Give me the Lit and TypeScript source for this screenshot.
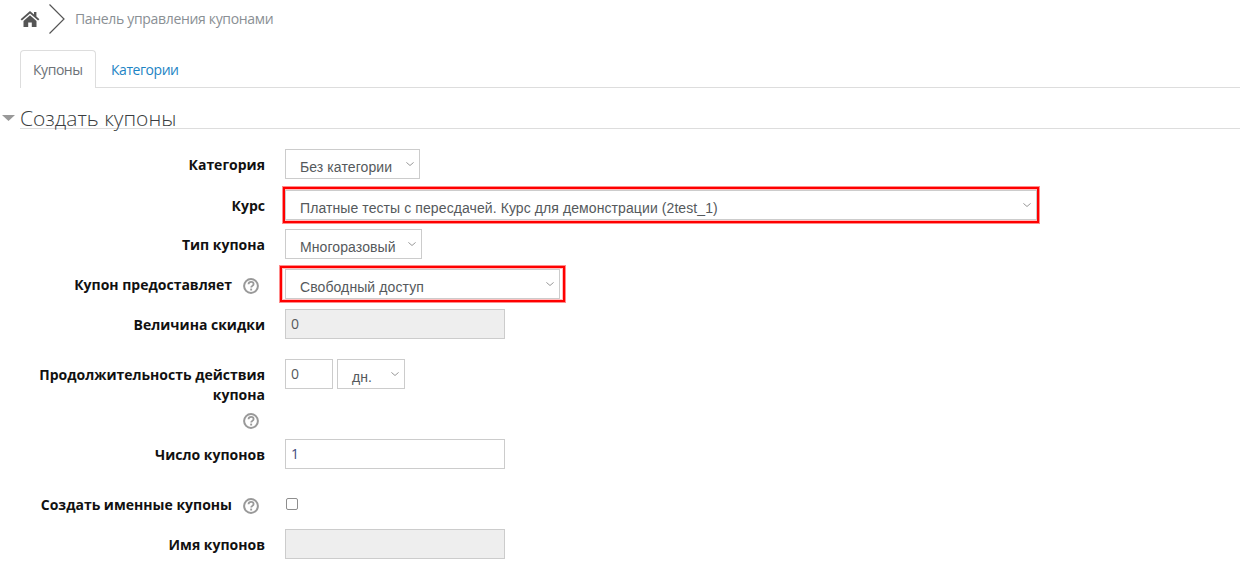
import { LitElement, html, css, svg } from "lit";
import { customElement } from "lit/decorators.js";

const help = html`<svg class="help" viewBox="0 0 16 16" aria-hidden="true">
  <circle cx="8" cy="8" r="6.9" fill="none" stroke="#999" stroke-width="2"></circle>
  <path d="M5.5 6.3C5.6 4.7 6.7 3.9 8.1 3.9c1.5 0 2.5.9 2.5 2.1 0 1.1-.7 1.5-1.4 2-.6.4-1 .8-1 1.6" fill="none" stroke="#999" stroke-width="1.8"></path>
  <rect x="7.2" y="10.6" width="1.9" height="1.9" fill="#999"></rect>
</svg>`;

const chev = svg`<path d="M0.4 0.4L4 3.5L7.6 0.4" fill="none" stroke="#999" stroke-width="1"></path>`;

const select = (text: string, cls: string) => html`<div class="select ${cls}">
  <span>${text}</span><svg class="chev" viewBox="0 0 8 4" aria-hidden="true">${chev}</svg>
</div>`;

@customElement("app-root")
export class AppRoot extends LitElement {
  static styles = css`
    :host { display: block; width: 1250px; height: 576px; overflow: hidden; background: #fff; font-family: "Open Sans", sans-serif; color: #373a3c; font-size: 14px; }
    .crumbs { display: flex; align-items: center; height: 38px; padding-left: 20px; }
    .home { width: 20px; height: 18px; display: block; }
    .sep { width: 16px; height: 30px; margin-left: 9px; display: block; }
    .crumb { margin-left: 10px; color: #8a8f94; font-size: 14px; letter-spacing: -0.33px; line-height: 38px; }
    .tabs { display: flex; margin: 12px 10px 0 20px; border-bottom: 1px solid #ddd; height: 37px; box-sizing: content-box; }
    .tab { box-sizing: border-box; height: 38px; padding: 0 12px; line-height: 38px; font-size: 14px; letter-spacing: -0.45px; border: 1px solid #ddd; border-bottom: 0; border-radius: 4px 4px 0 0; background: #fff; color: #6d7277; width: 76px; }
    .tab.link { border-color: transparent; background: transparent; color: #1d84c4; width: auto; height: 37px; padding-left: 14px; }
    .section { display: flex; align-items: flex-end; margin-top: 15px; margin-right: 10px; height: 26px; }
    .tri { width: 13px; height: 6px; margin: 0 5px 8px 2px; display: block; flex: none; }
    .section h2 { flex: 1; margin: 0; font-weight: 300; font-size: 21px; line-height: 30px; height: 25px; color: #3a3d40; border-bottom: 1px solid #ddd; box-sizing: content-box; white-space: nowrap; }
    .form { display: flex; flex-direction: column; padding-top: 20px; }
    .row { display: grid; grid-template-columns: 265px 1fr; column-gap: 20px; }
    .label { font-weight: 700; color: #111; font-size: 14px; line-height: 20px; text-align: right; padding-top: 6px; }
    .label.withhelp { display: flex; justify-content: flex-end; align-items: flex-start; white-space: nowrap; }
    .help { width: 16px; height: 16px; display: block; flex: none; }
    .withhelp .help { margin: 3px 6px 0 11px; }
    .helpline { display: flex; justify-content: flex-end; padding: 8px 6px 0 0; }
    .control { display: flex; gap: 4px; align-items: flex-start; }
    .select { position: relative; box-sizing: border-box; height: 30px; border: 1px solid #ccc; background: #fff; padding: 7px 0 0 14px; line-height: 20px; color: #55595c; font-family: "Liberation Sans", sans-serif; font-size: 14px; letter-spacing: 0.09px; white-space: nowrap; flex: none; }
    .select span { display: block; }
    .chev { position: absolute; right: 5px; top: 12px; width: 8px; height: 4px; }
    .w135 { width: 135px; }
    .w137 { width: 137px; }
    .w752 { width: 752px; }
    .w275 { width: 275px; }
    .w68 { width: 68px; }
    .red { display: inline-flex; border: 2px solid #f00; box-shadow: 0 0 0 1px rgba(255, 0, 0, 0.45), inset 0 0 0 1px rgba(255, 0, 0, 0.25); flex: none; margin-top: -3px; }
    .red.a { margin-left: -2px; padding: 1px 0; }
    .red.b { margin-left: -5px; padding: 1px 3px; }
    .input { box-sizing: border-box; height: 30px; width: 220px; border: 1px solid #ccc; padding: 0 6px 0 5px; line-height: 27px; color: #55595c; background: #fff; flex: none; }
    .input.dis { background: #eee; }
    .input.sm { width: 48px; }
    .input.blue { color: #3c4a7d; }
    .check { box-sizing: border-box; width: 12px; height: 12px; border: 1px solid #8e8e8e; border-radius: 2px; background: #fff; margin: 9px 0 0 1px; }
    .h39 { height: 39px; }
    .h40 { height: 40px; }
    .h41 { height: 41px; }
    .h50 { height: 50px; }
    .h80 { height: 80px; }
  `;

  render() {
    return html`
      <nav class="crumbs">
        <svg class="home" viewBox="0 0 20 18" aria-hidden="true">
          <path d="M10 1L0.6 9.2 1.9 10.6 10 3.6l8.1 7 1.3-1.4-3-2.6V2h-2.4v2.5z" fill="#555"></path>
          <path d="M3.5 11L10 5.3 16.5 11v6h-4.7v-4.5H8.2V17H3.5z" fill="#555"></path>
        </svg>
        <svg class="sep" viewBox="0 0 16 30" aria-hidden="true"><path d="M0.5 0.5L15 15 0.5 29.5" fill="none" stroke="#555" stroke-width="1.2"></path></svg>
        <span class="crumb">Панель управления купонами</span>
      </nav>
      <div class="tabs">
        <div class="tab">Купоны</div>
        <div class="tab link">Категории</div>
      </div>
      <div class="section">
        <svg class="tri" viewBox="0 0 13 6" aria-hidden="true"><path d="M0 0H13L6.5 6z" fill="#999"></path></svg>
        <h2>Создать купоны</h2>
      </div>
      <div class="form">
        <div class="row h41"><div class="label">Категория</div><div class="control">${select("Без категории", "w135")}</div></div>
        <div class="row h39"><div class="label">Курс</div><div class="control"><div class="red a">${select("Платные тесты с пересдачей. Курс для демонстрации (2test_1)", "w752")}</div></div></div>
        <div class="row h40"><div class="label">Тип купона</div><div class="control">${select("Многоразовый", "w137")}</div></div>
        <div class="row h40"><div class="label withhelp">Купон предоставляет ${help}</div><div class="control"><div class="red b">${select("Свободный доступ", "w275")}</div></div></div>
        <div class="row h50"><div class="label">Величина скидки</div><div class="control"><div class="input dis">0</div></div></div>
        <div class="row h80"><div><div class="label">Продолжительность действия купона</div><div class="helpline">${help}</div></div><div class="control"><div class="input sm">0</div>${select("дн.", "w68")}</div></div>
        <div class="row h50"><div class="label">Число купонов</div><div class="control"><div class="input blue">1</div></div></div>
        <div class="row h40"><div class="label withhelp">Создать именные купоны ${help}</div><div class="control"><div class="check"></div></div></div>
        <div class="row"><div class="label">Имя купонов</div><div class="control"><div class="input dis"></div></div></div>
      </div>
    `;
  }
}
